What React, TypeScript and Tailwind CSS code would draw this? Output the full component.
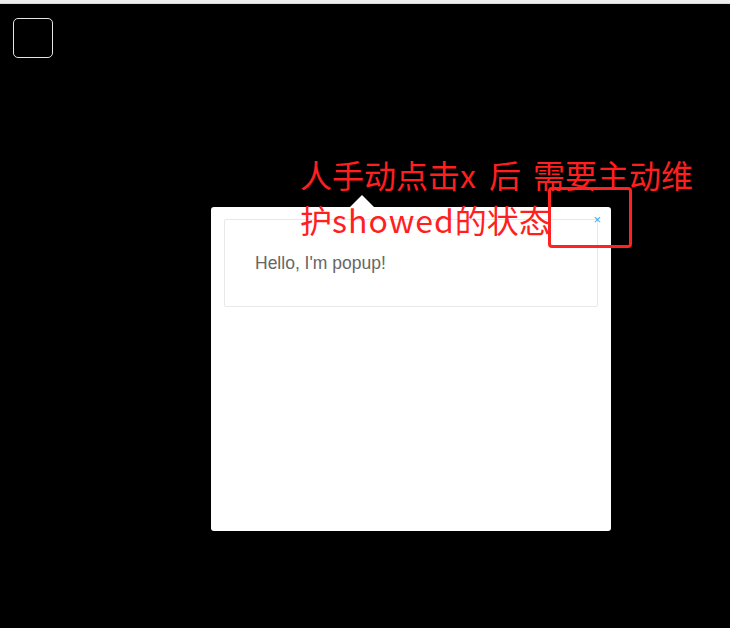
import React from "react";

export default function App() {
  return (
    <div className="relative w-[730px] h-[628px] bg-black overflow-hidden" style={{ fontFamily: "'Liberation Sans', Arial, sans-serif" }}>
      <div className="h-[4px] bg-[#eeeeee] border-b border-[#d8d8d8]" />
      <div className="pt-[14px] pl-[13px]">
        <div className="w-[40px] h-[40px] border border-[#e6e6e6] rounded-[5px]" />
      </div>
      <div className="relative mt-[149px] ml-[211px] w-[400px] h-[324px] bg-white rounded-[3px] pt-[12px] px-[13px]">
        <div className="absolute left-[139px] top-[-12px] w-0 h-0 border-l-[12px] border-r-[12px] border-b-[12px] border-l-transparent border-r-transparent border-b-white" />
        <div className="relative h-[88px] border border-[#e8e8e8] rounded-[2px] flex items-center pl-[30px]">
          <span className="text-[17.5px] text-[#666666]">Hello, I'm popup!</span>
          <span className="absolute right-[-4px] top-[-7px] text-[13px] leading-[13px] text-[#3fa2ea]">×</span>
        </div>
      </div>
      <div
        className="absolute left-[300px] top-[152px] text-[32px] leading-[45px] text-[#ff1f1f] whitespace-nowrap"
        style={{ fontFamily: "'Noto Sans CJK SC', 'Noto Sans', sans-serif" }}
      >
        人手动点击<span className="tracking-[1px]">x</span><span className="inline-block w-[12px]" />后<span className="inline-block w-[12px]" />需要主动维
        <br />
        护<span className="tracking-[1px]">showed</span>的状态
      </div>
      <div className="absolute left-[548px] top-[187px] w-[84px] h-[61px] border-[3px] border-[#ff2222] rounded-[4px]" />
    </div>
  );
}
